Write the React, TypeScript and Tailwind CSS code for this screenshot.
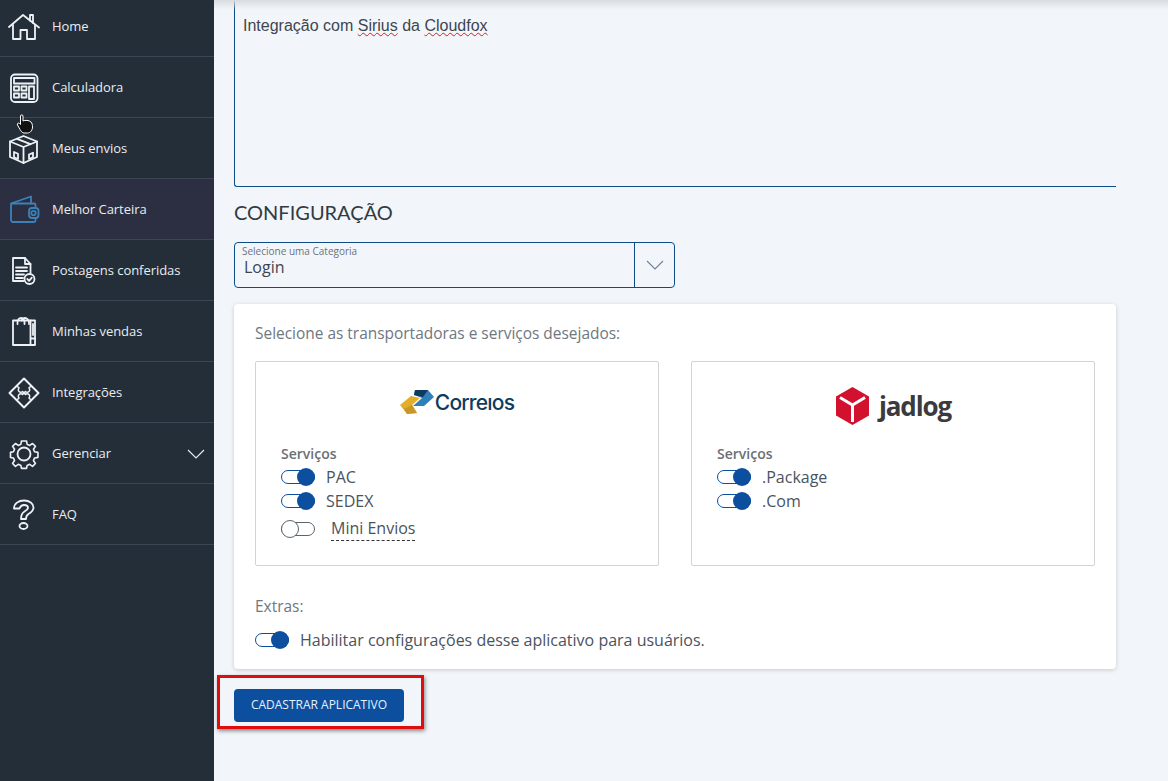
import type { ReactNode } from "react"

const stroke = { fill: "none", stroke: "currentColor", strokeWidth: 1.8, strokeLinejoin: "round" as const, strokeLinecap: "round" as const }

function Svg({ children }: { children: ReactNode }) {
    return (
        <svg width="32" height="32" viewBox="0 0 32 32" {...stroke}>
            {children}
        </svg>
    )
}

const HomeIcon = () => (
    <Svg>
        <path d="M1 16 15 4l16 12.500" />
        <path d="M22 9.500V4h3v8" />
        <path d="M5 14v14h7.500v-9h6.500v9h8V14" />
    </Svg>
)

const CalculatorIcon = () => (
    <Svg>
        <rect x="3" y="2.500" width="26.500" height="27.500" rx="4" />
        <rect x="6" y="6" width="20.500" height="5.500" />
        <rect x="6" y="14.500" width="5" height="4" />
        <rect x="13.500" y="14.500" width="5" height="4" />
        <rect x="6" y="21.500" width="5" height="4" />
        <rect x="13.500" y="21.500" width="5" height="4" />
        <rect x="21" y="14.500" width="5" height="12.500" />
    </Svg>
)

const BoxIcon = () => (
    <Svg>
        <path d="M15.500 3 29 8.500V24l-13.500 6L2 24V8.500Z" />
        <path d="M2 8.500 15.500 14 29 8.500M15.500 14v16" />
        <path d="M9 5.800 22.500 11.200" />
        <path d="M6 19l4 1.800V26l-4-1.800zM21 21.500l4-1.800v4.500l-4 1.800z" />
    </Svg>
)

const WalletIcon = () => (
    <Svg>
        <path d="M3 9.500 23 2.500v7" />
        <path d="M3 11c0-1 .8-1.500 1.500-1.500H26c1 0 1.500.8 1.500 1.500v3M27.500 24v2.500c0 1-.8 1.500-1.500 1.500H5c-1 0-2-1-2-2V11" />
        <rect x="21" y="14" width="9.500" height="10" rx="3" />
        <circle cx="25.500" cy="19" r="2.200" />
    </Svg>
)

const DocCheckIcon = () => (
    <Svg>
        <path d="M15.500 26H5V3h12l5.500 6v9" />
        <path d="M17 3v6h5.500" />
        <path d="M8 12.500h11M8 16h11M8 19.500h8M8 23h7" />
        <circle cx="21.500" cy="24" r="5" />
        <path d="m19.300 24 1.800 1.800 2.700-3.200" />
    </Svg>
)

const BagIcon = () => (
    <Svg>
        <path d="M5 4.500h22V29H5z" />
        <path d="M22.500 4.500V29M22.500 22.500h4.500M25 8v11" />
        <path d="M9.500 8V6.500c0-2.500 1.500-4.500 3.500-4.500s3.500 2 3.500 4.500V8M13.500 4.500c.5-1.500 2-2.500 3.500-2.500 2 0 4 2 4 4.500V8" />
    </Svg>
)

const PuzzleIcon = () => (
    <Svg>
        <path d="M16 1.500 30.500 16 16 30.500 1.500 16Z" strokeWidth="2" />
        <g transform="rotate(45 16 16)" strokeWidth="1.500">
            <path d="M16 6v3a2.500 2.500 0 1 1 0 5v4a2.500 2.500 0 1 0 0 5v3" />
            <path d="M6 16h3a2.500 2.500 0 1 0 5 0h4a2.500 2.500 0 1 1 5 0h3" />
        </g>
    </Svg>
)

const GearIcon = () => (
    <Svg>
        <circle cx="16" cy="16" r="6.500" />
        <path
            d="M13.200 1.500h5.600l.7 3.800 2.800 1.200 3.200-2.200 3.200 3.200-2.200 3.200 1.200 2.800 3.800.7v5.600l-3.800.7-1.200 2.800 2.200 3.200-3.200 3.200-3.200-2.200-2.800 1.200-.7 3.300h-5.600l-.7-3.300-2.800-1.200-3.200 2.200-3.200-3.200 2.200-3.200-1.200-2.800-3.300-.7v-5.600l3.300-.7 1.200-2.800-2.200-3.200 3.200-3.200 3.200 2.200 2.800-1.200z"
            transform="translate(1.600 1.600) scale(.9)"
        />
    </Svg>
)

const QuestionIcon = () => (
    <Svg>
        <path d="M6 9.500C6 4.500 10.500 1.500 16 1.500s9.500 3 9.500 7c0 3.500-2.500 5-5 6.500-2 1.200-2.500 2.500-2.500 5h-5c0-4 1-6 3.500-7.500 2-1.200 3.500-2 3.500-3.800 0-1.700-2-2.700-4-2.700-2.200 0-3.500 1-4.500 3.500Z" />
        <ellipse cx="15.500" cy="27" rx="4" ry="3" />
    </Svg>
)

const items = [
    { label: "Home", icon: <HomeIcon /> },
    { label: "Calculadora", icon: <CalculatorIcon /> },
    { label: "Meus envios", icon: <BoxIcon /> },
    { label: "Melhor Carteira", icon: <WalletIcon />, active: true },
    { label: "Postagens conferidas", icon: <DocCheckIcon /> },
    { label: "Minhas vendas", icon: <BagIcon /> },
    { label: "Integrações", icon: <PuzzleIcon /> },
    { label: "Gerenciar", icon: <GearIcon />, chevron: true },
    { label: "FAQ", icon: <QuestionIcon /> },
]

function Sidebar() {
    return (
        <aside className="w-[214px] shrink-0 bg-[#242e38] text-[13px] tracking-[-0.04px] text-[#e8edf2] font-['Open_Sans',sans-serif]">
            <div className="-mt-[4px]">
                {items.map((item) => (
                    <div
                        key={item.label}
                        className={`flex h-[61px] items-center border-b border-[#3c4551] pl-[8px] pr-[9px] pt-[2px] ${item.active ? "bg-[#2c2f41]" : ""}`}
                    >
                        <span className={`flex w-[32px] justify-center ${item.active ? "text-[#3b82b8]" : "text-[#eef2f6]"}`}>{item.icon}</span>
                        <span className="ml-[12px] flex-1">{item.label}</span>
                        {item.chevron && (
                            <svg width="18" height="10" viewBox="0 0 18 10" fill="none" stroke="currentColor" strokeWidth="1.100">
                                <path d="M1 1l8 8 8-8" />
                            </svg>
                        )}
                    </div>
                ))}
            </div>
        </aside>
    )
}

function Toggle({ on = true }: { on?: boolean }) {
    return (
        <span className={`relative block h-[14px] w-[34px] shrink-0 rounded-full border ${on ? "border-[#0b4f9e]" : "border-[#5a6470]"} bg-white`}>
            {on ? (
                <span className="absolute -right-px -top-[3px] h-[18px] w-[18px] rounded-full bg-[#0b4f9e]" />
            ) : (
                <span className="absolute -left-px -top-[3px] h-[18px] w-[18px] rounded-full border border-[#5a6470] bg-white" />
            )}
        </span>
    )
}

function ToggleRow({ label }: { label: string }) {
    return (
        <div className="flex h-[24px] items-center gap-[11px]">
            <Toggle />
            <span className="text-[16px] text-[#4a5360]">{label}</span>
        </div>
    )
}

function CorreiosLogo() {
    return (
        <div className="flex h-[30px] items-center justify-center">
            <svg width="36" height="24" viewBox="0 0 36 24">
                <path d="M0 15 11 6l9 2-8 7 5 8-10 1z" fill="#e5ae2a" />
                <path d="M12 15l5 8-10 1-3-5z" fill="#c8962a" />
                <path d="M15 0h13l6 7-10 9H13l9-8-8-3z" fill="#2f7fb8" />
                <path d="M15 0h13l-5 7-9-2z" fill="#0e3a5c" />
            </svg>
            <span className="-ml-[1px] pt-[2px] font-['Inter',sans-serif] text-[21px] font-medium tracking-[-0.8px] text-[#0f3c5e]">Correıos</span>
        </div>
    )
}

function JadlogLogo() {
    return (
        <div className="flex h-[38px] items-center justify-center gap-[10px] pl-[1px]">
            <svg width="33" height="38" viewBox="0 0 33 38">
                <path d="M16.500 0 33 9.500v19L16.500 38 0 28.500v-19z" fill="#d2112f" />
                <path d="M4 10.500 16.500 18 29 10.500M16.500 18v17" fill="none" stroke="#fff" strokeWidth="3" />
            </svg>
            <span className="font-['Open_Sans',sans-serif] text-[26px] font-bold leading-none tracking-[-1.100px] text-[#3b3b3d]">jadlog</span>
        </div>
    )
}

function CarrierBox({ logo, children }: { logo: ReactNode; children: ReactNode }) {
    return (
        <div className="h-[205px] w-[404px] rounded-[2px] border border-[#d3d3d3] px-[25px]">
            <div className="h-[81px] pt-[25px]">{logo}</div>
            {children}
        </div>
    )
}

function Heading() {
    return <div className="text-[14px] font-semibold leading-[22px] text-[#6b6f76]">Serviços</div>
}

function HandCursor() {
    return (
        <svg className="absolute left-[16px] top-[114px]" width="18" height="20" viewBox="0 0 18 20">
            <path
                d="M4.500 2c0-1.500 2.500-1.500 2.500 0v5c2-1 6-1 8 1 1 1 1.500 3 1.500 5 0 3-2 6-5 6H8c-2 0-3-2-4-3.500L1.500 11c-.8-1.500 1-2.500 2-1.500l1 1z"
                fill="#111"
                stroke="#fff"
                strokeWidth="1"
            />
        </svg>
    )
}

export default function App() {
    return (
        <div className="relative flex h-[781px] w-[1168px] overflow-hidden bg-[#f2f6fa] font-['Open_Sans',sans-serif]">
            <Sidebar />
            <HandCursor />
            <main className="relative flex-1 pl-[20px] pr-[52px]">
                <div className="absolute inset-x-0 top-0 h-[10px] bg-gradient-to-b from-[#d9dcdf] to-transparent" />
                <div className="h-[187px] rounded-bl-[3px] border-b border-l border-[#0f4c86] pl-[8px] pt-[15px] font-['Liberation_Sans',sans-serif] text-[16px] leading-[22px] text-[#3e4550]">
                    Integração com <span className="underline decoration-[#d02020] decoration-wavy decoration-1 underline-offset-1">Sirius</span> da{" "}
                    <span className="underline decoration-[#d02020] decoration-wavy decoration-1 underline-offset-1">Cloudfox</span>
                </div>

                <h2 className="mt-[12px] h-[26px] font-['Lato',sans-serif] text-[20px] leading-[26px] text-[#333a42]">CONFIGURAÇÃO</h2>

                <div className="mt-[17px] flex h-[46px] w-[441px] rounded-[4px] border border-[#0f4c86]">
                    <div className="flex-1 pl-[7px] pt-[2px]">
                        <div className="text-[10px] leading-[12px] text-[#6b7280]">Selecione uma Categoria</div>
                        <div className="-mt-px pl-[2px] text-[16px] leading-[22px] text-[#3e4550]">Login</div>
                    </div>
                    <div className="flex w-[40px] items-center justify-center border-l border-[#0f4c86]">
                        <svg width="18" height="10" viewBox="0 0 18 10" fill="none" stroke="#6d8299" strokeWidth="1.100">
                            <path d="M1 1l8 8 8-8" />
                        </svg>
                    </div>
                </div>

                <section className="mt-[16px] h-[365px] rounded-[4px] bg-white px-[21px] pt-[18px] shadow-[0_1px_4px_rgba(0,0,0,0.18)]">
                    <p className="text-[15.45px] leading-[22px] text-[#6f7781]">Selecione as transportadoras e serviços desejados:</p>

                    <div className="mt-[17px] flex gap-[32px]">
                        <CarrierBox logo={<CorreiosLogo />}>
                            <Heading />
                            <ToggleRow label="PAC" />
                            <ToggleRow label="SEDEX" />
                            <div className="mt-[2px] flex h-[28px] items-center">
                                <Toggle on={false} />
                                <span className="ml-[16px] border-b border-dashed border-[#333] text-[16px] leading-[23px] text-[#4a5360]">Mini Envios</span>
                            </div>
                        </CarrierBox>
                        <CarrierBox logo={<JadlogLogo />}>
                            <Heading />
                            <ToggleRow label=".Package" />
                            <ToggleRow label=".Com" />
                        </CarrierBox>
                    </div>

                    <p className="mt-[29px] text-[15.45px] leading-[22px] text-[#6f7781]">Extras:</p>
                    <div className="mt-[11px] flex h-[24px] items-center gap-[11px]">
                        <Toggle />
                        <span className="text-[16px] text-[#4a5360]">Habilitar configurações desse aplicativo para usuários.</span>
                    </div>
                </section>

                <button className="mt-[20px] flex h-[33px] w-[170px] items-center justify-center rounded-[4px] bg-[#0b4f9e] pb-[2px] text-[12px] text-[#e8f0fa]">
                    CADASTRAR APLICATIVO
                </button>

                <div className="absolute left-[3px] top-[675px] h-[54px] w-[207px] border-[3px] border-[#e00d0d] shadow-[1px_2px_4px_rgba(0,0,0,0.45)]" />
            </main>
        </div>
    )
}
